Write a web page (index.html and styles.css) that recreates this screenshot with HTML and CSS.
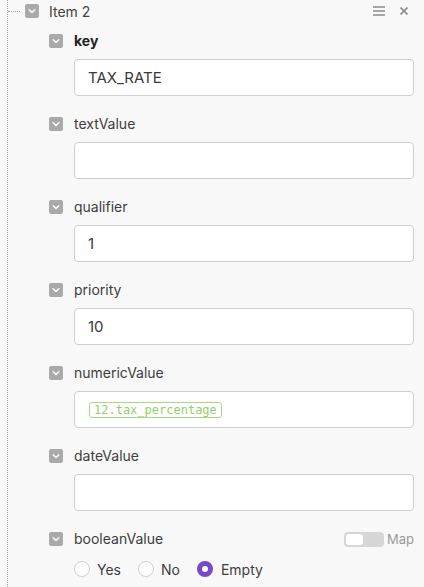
FILE: index.html
```html
<!DOCTYPE html>
<html lang="en">
<head>
    <meta charset="UTF-8">
    <title>Item 2</title>
    <link rel="stylesheet" href="styles.css">
</head>
<body>

<div class="tree">

    <!-- cabecalho do item -->
    <div class="item-head">
        <span class="chev"><svg viewBox="0 0 14 14"><path d="M4.2 5.8 7 8.4 9.8 5.8" /></svg></span>
        <span class="item-title">Item 2</span>
        <span class="acoes">
            <svg class="ico-menu" viewBox="0 0 12 10"><path d="M0 1h12M0 5h12M0 9h12" /></svg>
            <svg class="ico-close" viewBox="0 0 8 8"><path d="M0.5 0.5 7.5 7.5M7.5 0.5 0.5 7.5" /></svg>
        </span>
    </div>

    <div class="campos">

        <div class="campo">
            <div class="campo-head">
                <span class="chev"><svg viewBox="0 0 14 14"><path d="M4.2 5.8 7 8.4 9.8 5.8" /></svg></span>
                <label class="bold">key</label>
            </div>
            <div class="caixa">TAX_RATE</div>
        </div>

        <div class="campo">
            <div class="campo-head">
                <span class="chev"><svg viewBox="0 0 14 14"><path d="M4.2 5.8 7 8.4 9.8 5.8" /></svg></span>
                <label>textValue</label>
            </div>
            <div class="caixa"></div>
        </div>

        <div class="campo">
            <div class="campo-head">
                <span class="chev"><svg viewBox="0 0 14 14"><path d="M4.2 5.8 7 8.4 9.8 5.8" /></svg></span>
                <label>qualifier</label>
            </div>
            <div class="caixa">1</div>
        </div>

        <div class="campo">
            <div class="campo-head">
                <span class="chev"><svg viewBox="0 0 14 14"><path d="M4.2 5.8 7 8.4 9.8 5.8" /></svg></span>
                <label>priority</label>
            </div>
            <div class="caixa">10</div>
        </div>

        <div class="campo">
            <div class="campo-head">
                <span class="chev"><svg viewBox="0 0 14 14"><path d="M4.2 5.8 7 8.4 9.8 5.8" /></svg></span>
                <label>numericValue</label>
            </div>
            <div class="caixa"><span class="tag">12.tax_percentage</span></div>
        </div>

        <div class="campo">
            <div class="campo-head">
                <span class="chev"><svg viewBox="0 0 14 14"><path d="M4.2 5.8 7 8.4 9.8 5.8" /></svg></span>
                <label>dateValue</label>
            </div>
            <div class="caixa"></div>
        </div>

        <div class="campo">
            <div class="campo-head">
                <span class="chev"><svg viewBox="0 0 14 14"><path d="M4.2 5.8 7 8.4 9.8 5.8" /></svg></span>
                <label>booleanValue</label>
                <span class="map">
                    <span class="toggle"><span class="knob"></span></span>
                    Map
                </span>
            </div>
            <div class="radios">
                <span class="radio"><span class="bola"></span>Yes</span>
                <span class="radio"><span class="bola"></span>No</span>
                <span class="radio"><span class="bola marcada"></span>Empty</span>
            </div>
        </div>

    </div>
</div>

</body>
</html>
```

FILE: styles.css
```css
body {
    margin: 0;
    font-family: Inter, "Noto Sans", Arial, sans-serif;
    background-color: #f8f8f8;
    color: #3d3d3d;
    height: 587px;
    overflow: hidden;
}
.tree {
    margin-left: 7px;
    border-left: 1px dotted #a0a0a0;
    min-height: 587px;
    padding-right: 10px;
}
.item-head {
    position: relative;
    display: flex;
    align-items: center;
    height: 22px;
    padding-left: 17px;
}
.item-head::before {
    content: "";
    position: absolute;
    left: 0;
    top: 11px;
    width: 12px;
    border-top: 1px dotted #a0a0a0;
}
.chev {
    width: 14px;
    height: 14px;
    border-radius: 2px;
    background-color: #a9a9a9;
    flex-shrink: 0;
    display: flex;
}
.chev svg {
    width: 14px;
    height: 14px;
    fill: none;
    stroke: #fff;
    stroke-width: 1.4;
    stroke-linecap: round;
    stroke-linejoin: round;
}
.item-title {
    margin-left: 10px;
    font-size: 14px;
    color: #444;
}
.acoes {
    margin-left: auto;
    display: flex;
    align-items: center;
    gap: 15px;
    padding-right: 6px;
}
.ico-menu {
    width: 12px;
    height: 10px;
    stroke: #8a8a8a;
    stroke-width: 1.6;
}
.ico-close {
    width: 8px;
    height: 8px;
    stroke: #8a8a8a;
    stroke-width: 1.6;
}
.campos {
    padding-left: 41px;
    padding-top: 9px;
}
.campo {
    margin-bottom: 18px;
}
.campo-head {
    display: flex;
    align-items: center;
    height: 20px;
    margin-bottom: 8px;
}
.campo-head label {
    margin-left: 11px;
    font-size: 14px;
    color: #3d3d3d;
    line-height: 18px;
    margin-top: -1px;
}
.campo-head .bold {
    font-weight: bold;
    color: #222;
}
.caixa {
    margin-left: 25px;
    height: 35px;
    border: 1px solid #cfcfcf;
    border-radius: 4px;
    background-color: #fff;
    display: flex;
    align-items: center;
    padding-left: 13px;
    font-size: 15px;
    color: #3a3a3a;
}
.tag {
    margin-left: 1px;
    font-family: "DejaVu Sans Mono", "Liberation Mono", monospace;
    font-size: 12px;
    color: #93cf68;
    border: 1px solid #a4d982;
    border-radius: 3px;
    padding: 0 4px;
    line-height: 14px;
}
.map {
    margin-left: auto;
    display: flex;
    align-items: center;
    gap: 3px;
    font-size: 13px;
    color: #9a9a9a;
}
.toggle {
    width: 40px;
    height: 15px;
    border-radius: 4px;
    background-color: #d6d6d6;
    display: flex;
    align-items: center;
    padding-left: 2px;
    box-sizing: border-box;
}
.knob {
    width: 17px;
    height: 11px;
    border-radius: 3px;
    background-color: #fff;
}
.radios {
    margin-left: 25px;
    display: flex;
    align-items: center;
    height: 24px;
}
.radio {
    display: flex;
    align-items: center;
    font-size: 14px;
    color: #3d3d3d;
    margin-right: 17px;
}
.bola {
    width: 14px;
    height: 14px;
    border: 1px solid #cfcfcf;
    border-radius: 50%;
    background-color: #fff;
    margin-right: 7px;
}
.bola.marcada {
    width: 6px;
    height: 6px;
    border: 5px solid #7749c7;
    margin-right: 8px;
}
```
